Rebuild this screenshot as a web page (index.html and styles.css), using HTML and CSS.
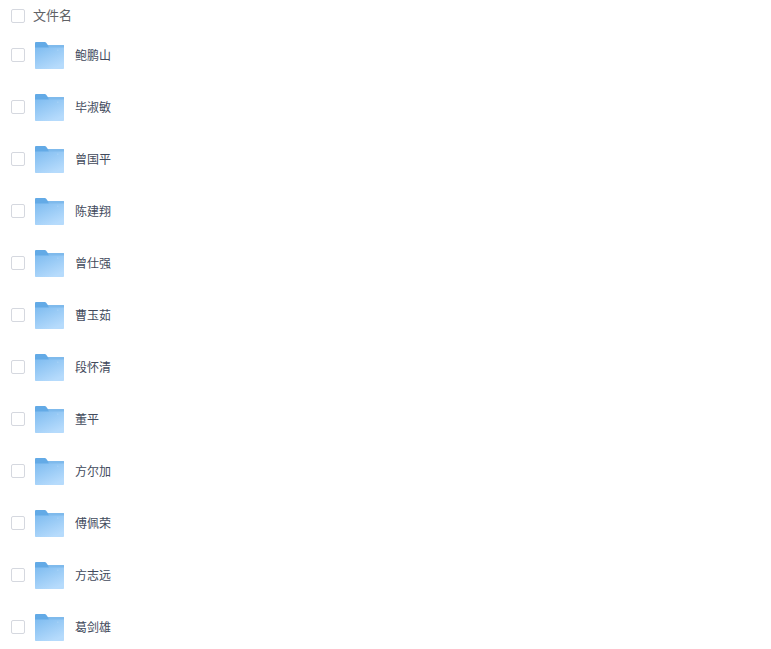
FILE: index.html
```html
<!DOCTYPE html>
<html lang="zh-CN">
<head>
    <meta charset="UTF-8">
    <meta name="viewport" content="width=device-width, initial-scale=1.0">
    <title>文件列表</title>
    <link rel="stylesheet" href="styles.css">
</head>
<body>
    <svg class="defs" width="0" height="0" aria-hidden="true">
        <defs>
            <linearGradient id="folder-front" x1="0" y1="0" x2="0.6" y2="1">
                <stop offset="0" stop-color="#7fbcf0"/>
                <stop offset="1" stop-color="#b6dbfc"/>
            </linearGradient>
            <symbol id="folder" viewBox="0 0 29 27">
                <path d="M0 1.200C0 .5.5 0 1.200 0h8.600c.6 0 1 .2 1.400.7L12.800 3H27.800c.7 0 1.200.5 1.200 1.200V10H0z" fill="#63aae6"/>
                <path d="M12.800 3H27.800c.7 0 1.200.5 1.200 1.200V6H14z" fill="#7fbaec"/>
                <path d="M0 5.500h29V26c0 .6-.4 1-1 1H1c-.6 0-1-.4-1-1z" fill="url(#folder-front)"/>
                <path d="M22 7.500h1.500v1.500H22z" fill="#a3d0f6"/>
            </symbol>
        </defs>
    </svg>

    <div class="file-list">
        <div class="file-head">
            <span class="check"></span>
            <span class="head-name">文件名</span>
        </div>
        <div class="file-row"><span class="check"></span><svg class="folder"><use href="#folder"/></svg><span class="file-name">鲍鹏山</span></div>
        <div class="file-row"><span class="check"></span><svg class="folder"><use href="#folder"/></svg><span class="file-name">毕淑敏</span></div>
        <div class="file-row"><span class="check"></span><svg class="folder"><use href="#folder"/></svg><span class="file-name">曾国平</span></div>
        <div class="file-row"><span class="check"></span><svg class="folder"><use href="#folder"/></svg><span class="file-name">陈建翔</span></div>
        <div class="file-row"><span class="check"></span><svg class="folder"><use href="#folder"/></svg><span class="file-name">曾仕强</span></div>
        <div class="file-row"><span class="check"></span><svg class="folder"><use href="#folder"/></svg><span class="file-name">曹玉茹</span></div>
        <div class="file-row"><span class="check"></span><svg class="folder"><use href="#folder"/></svg><span class="file-name">段怀清</span></div>
        <div class="file-row"><span class="check"></span><svg class="folder"><use href="#folder"/></svg><span class="file-name">董平</span></div>
        <div class="file-row"><span class="check"></span><svg class="folder"><use href="#folder"/></svg><span class="file-name">方尔加</span></div>
        <div class="file-row"><span class="check"></span><svg class="folder"><use href="#folder"/></svg><span class="file-name">傅佩荣</span></div>
        <div class="file-row"><span class="check"></span><svg class="folder"><use href="#folder"/></svg><span class="file-name">方志远</span></div>
        <div class="file-row"><span class="check"></span><svg class="folder"><use href="#folder"/></svg><span class="file-name">葛剑雄</span></div>
    </div>
</body>
</html>
```

FILE: styles.css
```css
html, body {
    height: 100%;
}

body {
    margin: 0;
    overflow: hidden;
    background-color: #fff;
    font-family: "Noto Sans CJK SC", "Liberation Sans", sans-serif;
}

.defs {
    position: absolute;
}

.file-list {
    padding-left: 11px;
}

.file-head {
    display: flex;
    align-items: center;
    box-sizing: border-box;
    height: 29px;
    padding-top: 3px;
}

.file-row {
    display: flex;
    align-items: center;
    height: 52px;
}

.check {
    flex: none;
    box-sizing: border-box;
    width: 14px;
    height: 14px;
    border: 1px solid #d5d8df;
    border-radius: 2px;
    background-color: #fff;
}

.head-name {
    margin-left: 8px;
    padding-bottom: 3px;
    font-size: 13px;
    color: #606266;
}

.folder {
    flex: none;
    width: 29px;
    height: 27px;
    margin-left: 9.5px;
}

.file-name {
    margin-left: 11.5px;
    padding-bottom: 2px;
    font-size: 12px;
    color: #424a5c;
}
```
